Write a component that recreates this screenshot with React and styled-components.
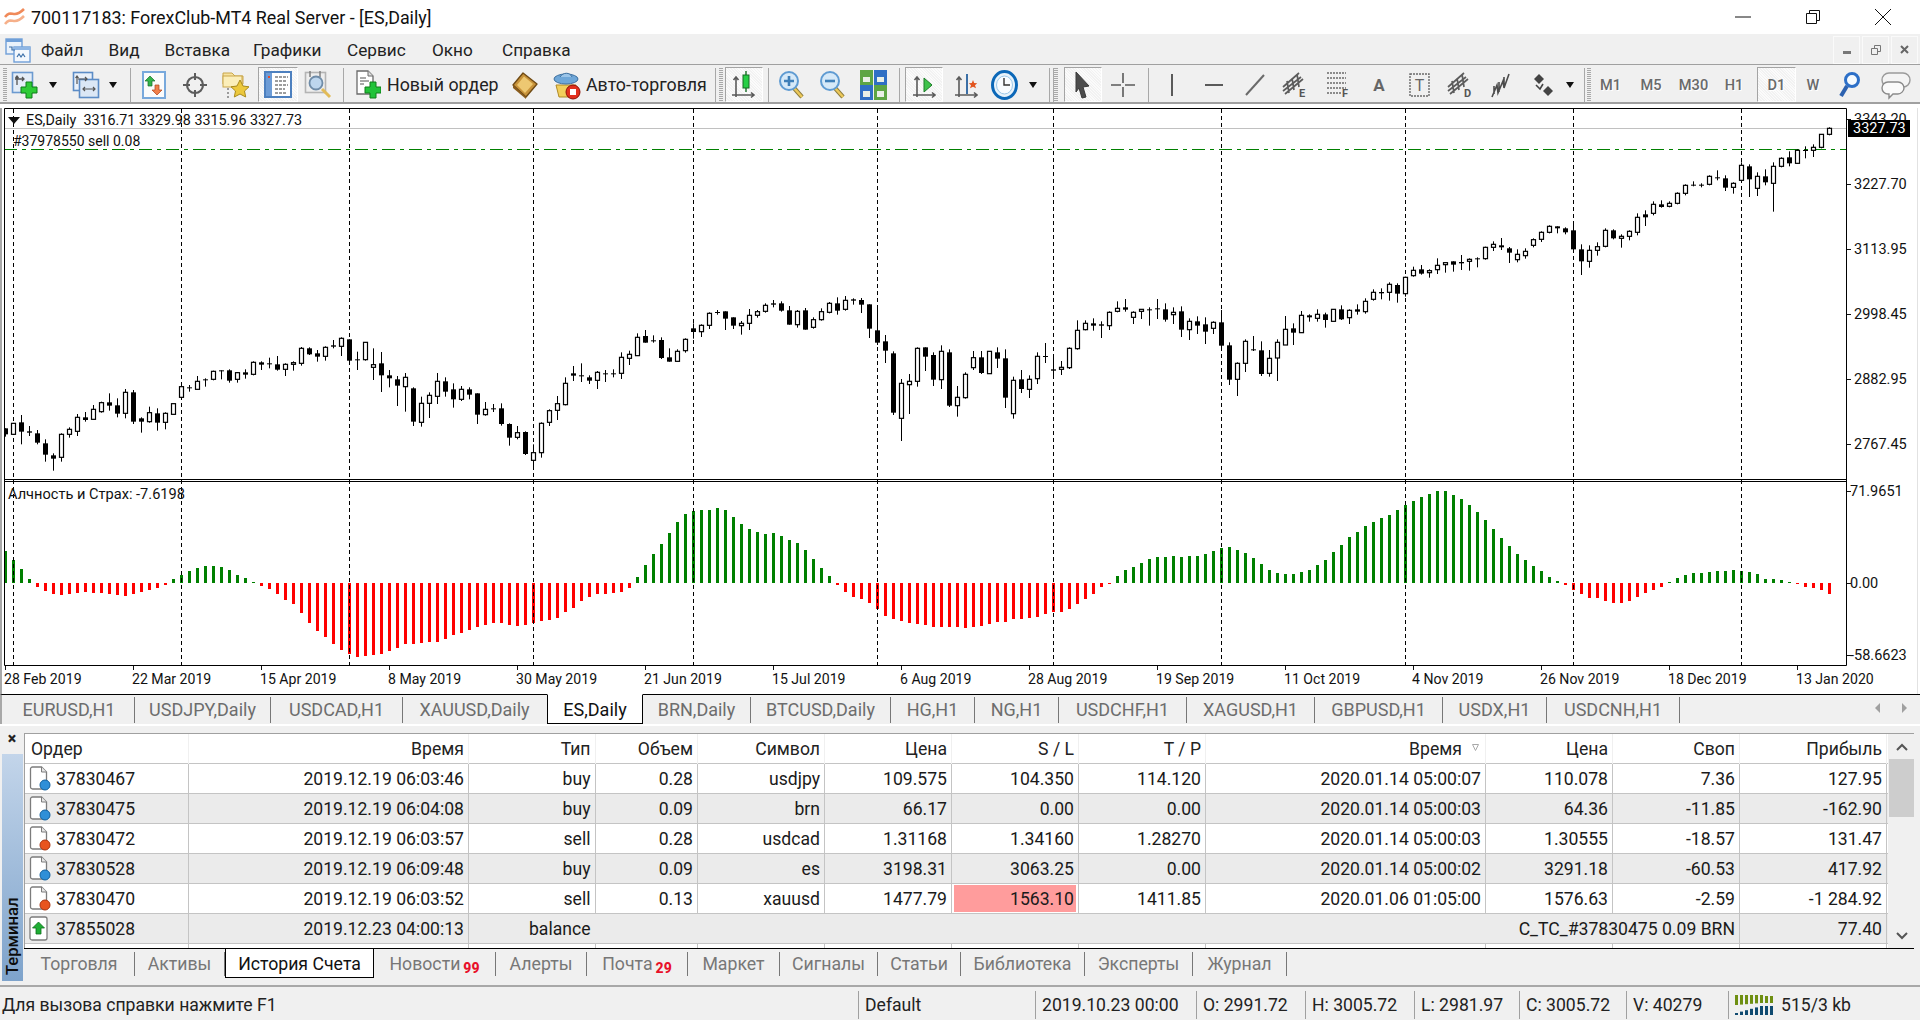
import React from 'react';
import styled, { createGlobalStyle } from 'styled-components';

const Global = createGlobalStyle`
  html, body { margin: 0; padding: 0; background: #f0f0f0; }
  * { box-sizing: border-box; }
  body { font-family: Roboto, "Liberation Sans", sans-serif; color: #1c1c1c; }
`;

const Window = styled.div`
  width: 1920px; height: 1020px; overflow: hidden; display: flex; flex-direction: column; background: #f0f0f0;
`;
const TitleBar = styled.div`
  height: 34px; background: #fff; display: flex; align-items: center; padding: 0 2px 0 4px; flex: none;
`;
const TitleText = styled.div`
  font-size: 17.9px; margin-left: 5px; color: #111; flex: 1; white-space: nowrap;
`;
const WinBtn = styled.div`
  width: ${p => p.$w}px; height: 34px; display: flex; align-items: center; justify-content: center;
  svg { display: block; }
`;
const MenuBar = styled.div`
  height: 31px; flex: none; display: flex; align-items: center; border-bottom: 1px solid #a0a0a0; padding: 1px 0 0 5px; background: #f0f0f0;
  > svg { margin-right: 10px; display: block; flex: none; }
`;
const MenuItem = styled.div`
  font-size: 17.2px; color: #222; width: ${p => p.$w}px; white-space: nowrap;
`;
const MdiBtns = styled.div`
  margin-left: auto; display: flex; gap: 2px; margin-right: 2px; height: 28px;
`;
const MdiBtn = styled.div`
  width: 27px; height: 28px; border: 1px solid #fafafa; display: flex; align-items: center; justify-content: center;
`;
const Toolbar = styled.div`
  height: 39px; flex: none; display: flex; align-items: center; padding: 2px 0 0 3px;
  background: #f0f0f0; border-bottom: 2px solid #a0a0a0;
`;
const Grip = styled.div`
  width: 4px; height: 34px; margin-left: ${p => p.$ml || 0}px; flex: none;
  background-image: repeating-linear-gradient(to bottom, #a8a8a8 0 1px, transparent 1px 2px);
`;
const Sep = styled.div`
  width: 1px; height: 34px; background: #a8a8a8; flex: none; margin-left: ${p => p.$ml}px;
`;
const Tool = styled.div`
  width: ${p => p.$w}px; margin-left: ${p => p.$ml}px; flex: none; height: 35px;
  display: flex; align-items: center; justify-content: center;
  ${p => p.$active ? `
    background-color: #f7f7f7;
    background-image: repeating-linear-gradient(45deg, #f2f2f2 0 1px, #fbfbfb 1px 2px);
    border: 1px solid #fff; border-top-color: #a4a4a4; border-left-color: #a4a4a4;
  ` : ''}
  svg { display: block; flex: none; }
`;
const ToolText = styled.div`
  width: ${p => p.$w}px; margin-left: ${p => p.$ml}px; flex: none; font-size: 17.8px; color: #222; white-space: nowrap;
`;
const Period = styled(Tool)`
  font-size: 14.6px; color: #6a6a6a; font-weight: 500; text-shadow: 1px 1px 0 #fff;
`;
const DropArrow = styled.div`
  flex: none; margin-left: ${p => p.$ml}px; width: 0; height: 0;
  border-left: 4.5px solid transparent; border-right: 4.5px solid transparent; border-top: 6px solid #111;
`;

const ChartArea = styled.div`
  flex: none; height: 590px; background: #fff; display: flex; padding: 4px 2px 0 0; position: relative;
`;
const EdgeLine = styled.div`
  flex: none; width: 4px; border-left: 2px solid #a8a8a8;
`;
const ChartColumn = styled.div`
  display: flex; flex-direction: column; width: 1843px; flex: none;
`;
const Plot = styled.div`
  position: relative; width: 1843px; height: 558px; flex: none;
  svg { display: block; }
`;
const Overlay = styled.div`
  position: absolute; left: ${p => p.$x}px; top: ${p => p.$y}px; font-size: ${p => p.$fs}px; color: #111; white-space: pre; line-height: 16px;
  display: flex; align-items: center;
`;
const Tri = styled.span`
  width: 0; height: 0; border-left: 6px solid transparent; border-right: 6px solid transparent; border-top: 7px solid #111; margin-right: 6px;
`;
const DateAxis = styled.div`
  display: flex; height: 28px;
`;
const DateCell = styled.div`
  width: 128px; flex: none; font-size: 14.1px; color: #111; position: relative; line-height: 16px; padding-top: 5px; white-space: nowrap;
  &::before { content: ''; position: absolute; left: 1px; top: 0; width: 1px; height: 4px; background: #111; }
`;
const PriceAxis = styled.div`
  flex: 1; position: relative; display: flex; flex-direction: column; border-right: 1px solid #e2e2e2;
`;
const PriceGroup = styled.div`
  height: 373px; flex: none; display: flex; flex-direction: column; gap: 49px; padding: 4px 0 0 7px;
`;
const IndicatorGroup = styled.div`
  display: flex; flex-direction: column; padding: 3px 0 0 3px;
`;
const AxisLabel = styled.div`
  font-size: 14.5px; line-height: 16px; height: 16px; color: #111; position: relative; margin-top: ${p => p.$mt || 0}px; white-space: nowrap;
  &::before { content: ''; position: absolute; left: ${p => p.$tick}px; top: 7px; width: 4px; height: 1px; background: #111; }
`;
const PriceTag = styled.div`
  position: absolute; left: 1px; top: 12px; width: 62px; height: 17px; background: #000; color: #fff; font-size: 14.5px; line-height: 17px; padding-left: 5px;
`;

const ChartTabs = styled.div`
  height: 30px; flex: none; display: flex; border-top: 1px solid #000; position: relative; background: #f0f0f0; border-left: 2px solid #a8a8a8;
`;
const TabsInset = styled.div`
  display: flex; margin-left: 2px;
`;
const ChartTab = styled.div`
  width: ${p => p.$w}px; flex: none; font-size: 18px; text-align: center; white-space: nowrap; line-height: 26px; height: 26px; margin-top: 2px;
  color: #6d6d6d; border-right: 1px solid #777;
  ${p => p.$active ? `
    color: #111; background: #fff; height: 30px; margin-top: -1px; border: 1px solid #000; border-top: 1px solid #fff; line-height: 29px;
  ` : ''}
  ${p => p.$plain ? `border-right-color: transparent;` : ''}
`;
const ScrollArrows = styled.div`
  margin-left: auto; display: flex; gap: 22px; margin-right: 13px; padding-top: 8px;
`;
const ArrowLeft = styled.div`
  width: 0; height: 0; border-top: 5px solid transparent; border-bottom: 5px solid transparent; border-right: 5px solid #a0a0a0;
`;
const ArrowRight = styled.div`
  width: 0; height: 0; border-top: 5px solid transparent; border-bottom: 5px solid transparent; border-left: 5px solid #a0a0a0;
`;

const Terminal = styled.div`
  flex: none; height: 261px; display: flex; border-top: 2px solid #fff; background: #f0f0f0;
`;
const Side = styled.div`
  width: 24px; flex: none; display: flex; flex-direction: column; padding: 5px 0 0 2px;
`;
const CloseX = styled.div`
  height: 23px; flex: none; font-size: 16px; font-weight: 900; text-align: center; line-height: 16px; color: #222; padding-right: 2px;
`;
const SideLabel = styled.div`
  height: 227px; width: 21px; flex: none; background: linear-gradient(to top, #c3d5ea, #7ea3cb);
  display: flex; align-items: center; justify-content: flex-start; writing-mode: vertical-rl; transform: rotate(180deg);
  font-size: 16.6px; font-weight: 500; color: #0c0c0c; padding-top: 6px;
`;
const TerminalMain = styled.div`
  flex: 1; display: flex; flex-direction: column; padding: 7px 6px 0 0; min-width: 0;
`;
const GridWrap = styled.div`
  height: 215px; flex: none; display: flex; border-top: 1px solid #a0a0a0; border-left: 1px solid #a0a0a0;
  overflow: hidden; background: #fff;
`;
const Table = styled.div`
  width: 1863px; flex: none; overflow: hidden;
`;
const columns = '164px 280px 126.5px 102.5px 127px 127px 127px 127px 280px 127px 127px 147px';
const HeadRow = styled.div`
  display: grid; grid-template-columns: ${columns}; height: 30px; border-bottom: 1px solid #c4c4c4; background: #fff;
`;
const HeadCell = styled.div`
  font-size: 17.6px; line-height: 30px; text-align: ${p => p.$left ? 'left' : 'right'};
  padding: ${p => p.$left ? '0 0 0 6px' : `0 ${p.$sorted ? 23 : 4}px 0 0`};
  border-right: 1px solid #f0f0f0; color: #222; white-space: nowrap; position: relative;
`;
const SortMark = styled.svg`
  position: absolute; right: 6px; top: 10px; display: block;
`;
const Row = styled.div`
  display: grid; grid-template-columns: ${columns}; height: 30px; border-bottom: 1px solid #c4c4c4;
  background: ${p => p.$even ? '#ebebeb' : '#fff'};
`;
const Cell = styled.div`
  font-size: 17.6px; line-height: 30px; height: 29px; text-align: right; padding-right: 4px; border-right: 1px solid #c4c4c4; color: #1a1a1a; white-space: nowrap;
  grid-column: ${p => p.$span ? `span ${p.$span}` : 'auto'};
  ${p => p.$noBorder ? `border-right-color: transparent;` : ''}
`;
const AlertCell = styled(Cell)`
  position: relative; z-index: 0;
  &::before { content: ''; position: absolute; inset: 1px 2px 1px 2px; background: #ff9c9c; z-index: -1; }
`;
const OrderCell = styled(Cell)`
  display: flex; align-items: center; text-align: left; padding: 0 0 0 4px; gap: 5px;
  svg { display: block; flex: none; }
`;
const ScrollBar = styled.div`
  width: 27px; flex: none; background: #f0f0f0; display: flex; flex-direction: column; align-items: center;
`;
const ScrollBtn = styled.div`
  height: ${p => p.$h}px; flex: none; width: 100%; display: flex; align-items: center; justify-content: center;
`;
const Thumb = styled.div`
  width: 26px; height: 58px; background: #cdcdcd; flex: none; margin-left: 1px;
`;
const ScrollTrack = styled.div`
  flex: 1;
`;
const BottomTabs = styled.div`
  height: 32px; flex: none; display: flex; border-top: 1px solid #000; background: #f0f0f0;
`;
const BottomTab = styled.div`
  width: ${p => p.$w}px; flex: none; font-size: 17.7px; color: #777; text-align: center; white-space: nowrap; line-height: 24px; height: 24px; margin-top: 3px;
  border-right: 1px solid #777;
  ${p => p.$active ? `
    color: #111; background: #fff; height: 30px; margin-top: -1px; border: 1px solid #000; line-height: 30px;
  ` : ''}
`;
const Badge = styled.span`
  color: #e8102a; font-weight: 800; font-size: 14px; margin-left: 3px; position: relative; top: 3px;
`;
const StatusBar = styled.div`
  margin-top: auto; height: 35px; flex: none; border-top: 2px solid #a8a8a8; display: flex; align-items: center; padding-top: 3px; background: #f0f0f0;
`;
const StatusCell = styled.div`
  width: ${p => p.$w}px; flex: none; height: 28px; font-size: 17.6px; line-height: 27px; padding-left: ${p => p.$first ? 2 : 6}px; color: #222; white-space: nowrap;
  border-left: ${p => p.$first ? 'none' : '1px solid #a0a0a0'};
  display: flex; align-items: center; gap: 8px;
  svg { display: block; flex: none; }
`;

/* ---------- chart data: [kind, bodyTop, bodyBottom, wickTop, wickBottom] measured per crop ---------- */
const seg1 = `b385 403 385 410,h370 403 370 405,b367 395 345 433,b394 398 378 408,b400 428 390 433,b430 464 418 485,b466 476 460 512,h403 472 400 485,h388 403 382 413,h352 394 342 408,b352 360 336 365,h328 358 315 358,h308 335 305 338,b307 317 280 332,b316 341 295 352,h277 340 267 355,b277 365 270 372,b355 365 352 398,h338 365 320 368,b340 368 325 392,h340 367 337 388,h311 343 311 343,h260 292 255 295,b262 265 255 275,h244 268 228 268,b238 241 235 260,h214 238 212 241,b211 214 211 238,b211 242 208 248,h218 238 216 248,b217 224 208 236,h187 223 184 226,b187 194 184 210,b190 193 173 205,b193 209 168 212,h193 208 190 228,h188 193 184 212,h145 190 141 197,b145 163 142 165,b160 170 150 185,h142 169 139 182,b136 140 120 145,h115 139 112 168,b118 182 118 188,b178 181 155 210,h127 179 127 182,h194 202 145 240,b190 226 156 276,b226 235 210 262,b238 257 228 318,h232 260 219 335,b265 365 262 378,h310 367 290 380,h286 310 277 354,h244 289 219 312,b244 275 232 290,b268 298 250 323,h268 298 258 303,b268 284 262 298,b280 344 280 372,h328 344 306 347,b325 328 312 336,b325 372 310 377,b372 413 370 437,h398 412 378 418,b396 462 394 465,h458 481 433 500,h370 458 367 473,h332 367 328 378,h311 331 288 360,h250 314 232 316,b220 227 198 243,b226 229 190 246,b232 242 226 252,h217 241 213 267,b220 223 210 246,b220 222 208 232,h172 220 157 237,h163 175 152 195,h112 167 100 168`;
const seg2 = `b198 218 180 218,b211 213 196 218,b210 264 202 267,b262 275 235 275,h244 274 238 274,h208 242 205 248,b175 186 160 206,h166 185 163 201,h130 166 127 177,b126 128 120 134,b124 146 124 180,b142 167 142 177,h160 167 153 194,h136 160 117 180,h125 136 120 143,h106 124 100 128,b100 104 90 112,b100 122 94 125,b121 164 108 164,h124 164 120 173,b121 179 114 179,h149 172 142 176,h125 149 115 152,h100 127 96 130,b100 122 82 134,h91 118 78 122,b88 92 85 104,b90 104 84 129,b103 176 103 204,b181 218 105 225,b214 242 195 279,b250 428 244 435,h340 445 327 513,h334 344 312 432,h235 334 232 350,b232 260 232 303,b255 329 247 348,h244 329 226 357,b247 407 238 411,h382 407 348 440,h313 383 307 386,h263 293 243 300,b262 309 243 312,h244 311 244 311,b247 266 232 294,b265 383 238 414,h331 431 320 446,b328 357 300 369,h328 358 316 384,h259 326 247 342,b258 260 219 279,b298 302 252 316,h292 298 273 315,h235 293 232 297,h181 236 151 239,h160 179 151 181,b160 167 145 182,b163 167 154 204,h127 167 124 180,h115 124 94 127,b112 119 87 125,h127 142 124 162,h118 124 118 147,b118 121 112 167,b115 118 87 147,b118 149 100 155,h127 134 112 162,b124 179 109 201,h154 179 145 210,b154 167 139 192,b163 185 142 222,h157 175 154 192,b157 227 120 240,b226 329 217 345,h280 328 277 378,h214 280 208 306,b238 240 198 243,b241 312 214 318,h265 310 240 320,h217 264 208 333`;
const seg3 = `h688 735 648 735,b685 698 670 735,h646 698 633 698,b646 652 643 665,h643 655 628 665,b643 660 638 683,h628 664 628 664,b628 658 616 660,h631 653 628 672,b628 635 613 644,h604 635 595 641,h577 598 568 602,b576 580 565 598,h553 577 547 602,b555 581 550 608,h532 581 530 590,h511 527 500 530,b508 521 495 524,h512 518 508 533,h496 509 475 522,h488 494 488 518,b484 494 484 515,b486 490 465 510,h478 484 475 512,b475 478 472 502,h442 476 440 479,h433 442 424 453,b436 442 414 450,b445 458 441 489,h463 479 448 487,h454 467 445 476,h419 436 415 442,h397 418 394 426,h379 397 376 400,b379 385 379 400,b385 397 382 403,b391 448 367 448,b448 484 433 525,h451 484 436 503,h440 451 427 467,h391 439 385 442,b391 415 388 418,h409 415 403 443,h394 409 391 421,h352 397 340 406,b343 352 331 378,h313 340 304 346,b313 321 301 323,h310 319 304 322,h280 310 277 313,h256 280 253 286,b254 256 244 259,b254 256 250 262,h229 253 226 256,b232 234 211 241,b235 263 226 273,h250 262 247 281,h196 241 187 244,b199 238 193 291,h229 265 217 288,b229 247 208 256,h199 250 187 335,h175 199 172 202,b172 190 154 199,h151 190 148 190,b150 152 139 175,h142 151 133 171,h103 142 103 145,h85 103 82 106`;
const parseSeg = (s, off) => s.split(',').map(t => {
  const [a, b, c, d] = t.slice(1).split(' ').map(v => off + Number(v) / 3);
  return { hollow: t[0] === 'h', top: a, bottom: b, hi: c, lo: d };
});
const candles = [...parseSeg(seg1, 300), ...parseSeg(seg2, 270), ...parseSeg(seg3, 100)];
const ind = [96,69,42,12,-12,-24,-33,-36,-33,-30,-27,-30,-30,-33,-36,-39,-33,-27,-21,-15,-6,12,24,36,45,51,51,48,39,24,15,3,-9,-18,-33,-51,-63,-90,-120,-144,-162,-183,-201,-213,-222,-219,-216,-213,-204,-195,-183,-183,-180,-177,-177,-168,-156,-150,-141,-132,-126,-120,-120,-126,-129,-126,-120,-114,-111,-105,-87,-75,-54,-42,-33,-33,-30,-27,-15,18,
54,87,117,150,183,207,216,219,219,225,219,198,177,162,153,147,150,141,129,120,99,72,45,21,-6,-27,-42,-48,-60,-78,-99,-108,-114,-120,-123,-126,-132,-132,-132,-132,-135,-132,-129,-123,-117,-117,-108,-108,-105,-102,-93,-87,-87,-78,-63,-48,-33,-12,-3,21,39,48,60,72,78,78,81,78,81,81,87,96,105,108,99,90,75,57,39,30,
27,27,33,39,54,69,93,114,138,153,171,183,195,204,219,234,246,258,267,276,276,264,252,234,213,189,162,135,111,87,69,51,36,18,6,-6,-21,-33,-45,-45,-54,-60,-60,-54,-42,-30,-21,-12,3,15,24,30,30,33,36,36,39,36,33,27,12,12,9,3,-3,-12,-15,-21,-33];
const gridIdx = [1,22,43,66,86,109,131,152,175,196,217];
const cx = i => 5.5 + 8 * i;

const ChartDrawing = () => (
  <svg width="1843" height="558" viewBox="4 108 1843 558">
    <rect x="4" y="108" width="1843" height="558" fill="#fff" />
    <line x1="4" x2="1847" y1="128.5" y2="128.5" stroke="#c0c0c0" strokeWidth="1.2" />
    {ind.map((v, i) => {
      const h = Math.abs(v) / 3;
      return <rect key={i} x={cx(i) - 1.5} y={v > 0 ? 583 - h : 583} width="3" height={h} fill={v > 0 ? '#008000' : '#ff0000'} />;
    })}
    {gridIdx.map(i => <line key={i} x1={cx(i)} x2={cx(i)} y1="109" y2="665" stroke="#000" strokeWidth="1" strokeDasharray="4 3" />)}
    <line x1="4" x2="1847" y1="149.5" y2="149.5" stroke="#008000" strokeWidth="1.1" strokeDasharray="13 5 4 5" />
    {candles.map((c, i) => {
      const x = cx(i);
      const h = Math.max(c.bottom - c.top, 1);
      return (
        <g key={i}>
          <line x1={x} x2={x} y1={c.hi} y2={c.lo} stroke="#000" strokeWidth="1" />
          {c.hollow
            ? <rect x={x - 2} y={c.top} width="4" height={h} fill="#fff" stroke="#000" strokeWidth="1.2" />
            : <rect x={x - 2.5} y={c.top} width="5" height={h} fill="#000" />}
        </g>
      );
    })}
    <rect x="4" y="479" width="1843" height="2" fill="#fff" />
    <path d="M4.5 108.5H1846.5V665.5H4.5Z M4 479.5H1847 M4 481.5H1847" fill="none" stroke="#000" strokeWidth="1" />
    {gridIdx.map(i => <line key={`g${i}`} x1={cx(i)} x2={cx(i)} y1="479" y2="482" stroke="#000" strokeWidth="1" />)}
  </svg>
);

/* ---------- icons ---------- */
const PLUS = 'M15 11h6v5h5v6h-5v5h-6v-5h-5v-6h5z';
const Logo = () => (
  <svg width="22" height="20" viewBox="0 0 22 20">
    <path d="M1 10c4-5 6-3 10-3s6-2 9-5" fill="none" stroke="#f08a5a" strokeWidth="2.6" />
    <path d="M1 17c4-5 6-3 10-3s6-2 9-5" fill="none" stroke="#f6b08a" strokeWidth="2.6" />
  </svg>
);
const ChildIcon = () => (
  <svg width="26" height="26" viewBox="0 0 26 26">
    <rect x="1" y="2" width="16" height="15" fill="#eaf2fb" stroke="#6f9fd8" strokeWidth="1.4" />
    <rect x="1" y="2" width="16" height="3" fill="#6f9fd8" />
    <rect x="9" y="10" width="16" height="15" fill="#f4f8fd" stroke="#6f9fd8" strokeWidth="1.4" />
    <rect x="9" y="10" width="16" height="3" fill="#8fb6e4" />
    <path d="M4 10h3v3h3M12 20l2-3 2 3 2-3 2 3" fill="none" stroke="#3a6ea8" strokeWidth="1.2" />
  </svg>
);
const Axes = ({ x = 0, y = 0, c = '#5a5a5a' }) => (
  <path transform={`translate(${x} ${y})`} d="M4 2v20M1.5 5L4 2l2.5 3M0 20h22M19 17.5l3 2.5-3 2.5" fill="none" stroke={c} strokeWidth="1.6" />
);
const IconNewChart = () => (
  <svg width="28" height="28" viewBox="0 0 28 28">
    <rect x="1.5" y="1.5" width="20" height="20" fill="#e4edf7" stroke="#6c9ad0" strokeWidth="1.6" />
    <path d="M6 5v9M4.500 7L6 5l1.500 2M4 8h9M11 6l2 2-2 2" fill="none" stroke="#555" strokeWidth="1.3" />
    <path d={PLUS} fill="#2ecb36" stroke="#0e7d18" strokeWidth="1" />
  </svg>
);
const IconProfile = () => (
  <svg width="28" height="28" viewBox="0 0 28 28">
    <rect x="1.5" y="1.5" width="19" height="18" fill="#e9f0f9" stroke="#5c8cc6" strokeWidth="1.6" />
    <rect x="7.5" y="8.5" width="19" height="18" fill="#dbe7f5" stroke="#5c8cc6" strokeWidth="1.6" />
    <path d="M5 5v8M3.500 7L5 5l1.500 2M6 8h9M13 6l2 2-2 2M11 18h12M13 16l-2 2 2 2M21 16l2 2-2 2" fill="none" stroke="#555" strokeWidth="1.2" />
  </svg>
);
const IconMarket = () => (
  <svg width="24" height="28" viewBox="0 0 24 28">
    <rect x="1" y="1" width="22" height="26" fill="#fbfbfb" stroke="#79a9dc" strokeWidth="2" />
    <path d="M8 5l5 5h-3v5H6v-5H3z" fill="#34b34a" stroke="#176f28" strokeWidth=".7" />
    <path d="M15 24l5-5h-3v-5h-4v5h-3z" fill="#f07f4a" stroke="#b0421a" strokeWidth=".7" />
  </svg>
);
const IconCrossCircle = () => (
  <svg width="24" height="24" viewBox="0 0 24 24">
    <circle cx="12" cy="12" r="8" fill="none" stroke="#5c5c5c" strokeWidth="2.2" />
    <path d="M12 0v7M12 17v7M0 12h7M17 12h7" stroke="#5c5c5c" strokeWidth="2" />
  </svg>
);
const IconFav = () => (
  <svg width="28" height="28" viewBox="0 0 28 28">
    <path d="M1 2h9l3 3h8v8H1z" fill="#f7e3a0" stroke="#c9a64a" />
    <rect x="1" y="5" width="19" height="11" fill="#fbeeb9" stroke="#c9a64a" />
    <path d="M6 17v10" stroke="#777" strokeWidth="1.4" strokeDasharray="2 2" />
    <path d="M18 9l3 6 6 .8-4.500 4.200 1.200 6L18 23l-5.700 3 1.200-6L9 15.800l6-.8z" fill="#ecc83c" stroke="#a98a1c" />
  </svg>
);
const IconNavigator = () => (
  <svg width="28" height="27" viewBox="0 0 28 27">
    <rect x="1" y="1" width="26" height="25" fill="#fff" stroke="#4d80bf" strokeWidth="2" />
    <rect x="2" y="2" width="6" height="23" fill="#6d9cd6" />
    <rect x="4" y="5" width="2" height="2" fill="#e84a2a" />
    <path d="M11 6h13M11 10h11M11 14h13M11 18h10M11 22h12" stroke="#3c3c3c" strokeWidth="1.2" strokeDasharray="3 1" />
  </svg>
);
const IconTester = () => (
  <svg width="28" height="29" viewBox="0 0 28 29">
    <rect x="1.5" y="2.5" width="20" height="20" fill="#eeeeee" stroke="#b4b4b4" strokeWidth="1.6" />
    <path d="M6 1v6M16 1v6" stroke="#7a7a7a" strokeWidth="1.4" />
    <circle cx="12" cy="13" r="6.5" fill="#bdd6ee" stroke="#6f8ca8" strokeWidth="1.8" />
    <path d="M18 19l8 8" stroke="#e2bb58" strokeWidth="3" />
  </svg>
);
const IconOrder = () => (
  <svg width="26" height="29" viewBox="0 0 26 29">
    <path d="M2 1h11l5 5v18H2z" fill="#fff" stroke="#6a6a6a" strokeWidth="1.3" />
    <path d="M13 1v5h5" fill="#ddd" stroke="#6a6a6a" />
    <path d="M5 8h6M5 11h9M5 14h4" stroke="#555" strokeWidth="1.2" />
    <path d={PLUS} transform="translate(0 1)" fill="#22c33a" stroke="#0e7d18" />
  </svg>
);
const IconBook = () => (
  <svg width="26" height="28" viewBox="0 0 26 28">
    <path d="M1 14L11 2l14 11-11 13z" fill="#c8933a" stroke="#6f4a14" strokeWidth="1.4" strokeLinejoin="round" />
    <path d="M5 14L12 5.500l9 7.500-8 9z" fill="#edc872" />
    <path d="M1 14l13 12v2L1 17z" fill="#8a5c1c" />
  </svg>
);
const IconAuto = () => (
  <svg width="28" height="30" viewBox="0 0 28 30">
    <path d="M3 15h20l-2 12H6z" fill="#f2cf5c" stroke="#b08a25" />
    <ellipse cx="13" cy="9" rx="12" ry="5" fill="#6fa7d8" stroke="#3d6f9e" />
    <path d="M7 7c3-5 10-5 12 0" fill="#9ac4e8" stroke="#3d6f9e" />
    <circle cx="20" cy="22" r="7" fill="#e2301e" stroke="#8e1208" />
    <rect x="17" y="19" width="6" height="6" fill="#fff" />
  </svg>
);
const IconCandleMode = () => (
  <svg width="26" height="30" viewBox="0 0 26 30">
    <Axes x="1" y="5" />
    <path d="M15 1v21" stroke="#146b22" strokeWidth="1.4" />
    <rect x="12" y="5" width="6" height="13" fill="#26cf45" stroke="#146b22" />
  </svg>
);
const IconZoom = ({ minus }) => (
  <svg width="26" height="30" viewBox="0 0 26 30">
    <path d="M15 18l8 9" stroke="#8a7a3c" strokeWidth="4.4" />
    <path d="M15 18l8 9" stroke="#ecc85a" strokeWidth="2.6" />
    <circle cx="10" cy="11" r="9" fill="#d6e9f8" stroke="#5f9bd2" strokeWidth="2" />
    <path d={minus ? 'M5 11h10' : 'M5 11h10M10 6v10'} stroke="#3f7fb8" strokeWidth="2.6" />
  </svg>
);
const IconTile = () => (
  <svg width="27" height="30" viewBox="0 0 27 30">
    <rect x="0" y="0" width="13" height="15" fill="#5da544" />
    <rect x="14" y="0" width="13" height="15" fill="#2f6fc4" />
    <rect x="0" y="15" width="13" height="15" fill="#2f6fc4" />
    <rect x="14" y="15" width="13" height="15" fill="#5da544" />
    <path d="M3 7h7v5H3zM17 7h7v5h-7zM3 21h7v6H3zM17 21h7v6h-7z" fill="#e8efe6" />
  </svg>
);
const IconShift = () => (
  <svg width="24" height="30" viewBox="0 0 24 30">
    <Axes x="1" y="5" />
    <path d="M12 8l8 7-8 7z" fill="#3ec24a" stroke="#1c7c28" />
  </svg>
);
const IconAutoScroll = () => (
  <svg width="24" height="30" viewBox="0 0 24 30">
    <Axes x="1" y="5" />
    <path d="M13 4v20" stroke="#3b6fa6" strokeWidth="2" />
    <path d="M19 10l1.200 3 3 .2-2.200 2 1 3-3-1.500-3 1.500 1-3-2.200-2 3-.2z" fill="#e2541e" />
  </svg>
);
const IconClock = () => (
  <svg width="27" height="30" viewBox="0 0 27 30">
    <ellipse cx="13.5" cy="15" rx="12" ry="13.5" fill="#e8f3fb" stroke="#0c68b8" strokeWidth="3" />
    <ellipse cx="13.5" cy="15" rx="8" ry="9" fill="#f8fcff" stroke="#9cc8e8" />
    <path d="M13 8v7h6" fill="none" stroke="#333" strokeWidth="1.4" />
  </svg>
);
const IconCursor = () => (
  <svg width="16" height="28" viewBox="0 0 16 28">
    <path d="M1 1l13 14-6 1 3 10-4 1-3-10-3 4z" fill="#4c4c4c" stroke="#3a3a3a" />
  </svg>
);
const IconCross = () => (
  <svg width="24" height="24" viewBox="0 0 24 24">
    <path d="M12 0v10M12 14v10M0 12h10M14 12h10" stroke="#5a5a5a" strokeWidth="1.6" />
  </svg>
);
const IconV = () => <svg width="4" height="22" viewBox="0 0 4 22"><path d="M2 0v22" stroke="#5a5a5a" strokeWidth="2" /></svg>;
const IconH = () => <svg width="18" height="4" viewBox="0 0 18 4"><path d="M0 2h18" stroke="#5a5a5a" strokeWidth="2" /></svg>;
const IconTrend = () => <svg width="20" height="22" viewBox="0 0 20 22"><path d="M1 21L19 1" stroke="#6a6a6a" strokeWidth="2" /></svg>;
const IconChannel = ({ letter }) => (
  <svg width="27" height="33" viewBox="0 0 27 33">
    <path d="M1 19L17 5M1 23L19 9M3 26L21 11M7 25L5 13M12 22L10 10M17 19L15 6" fill="none" stroke="#5c5c5c" strokeWidth="1.7" />
    <text x="17" y="29" fontSize="11" fontWeight="700" fontFamily="Roboto, sans-serif" fill="#555">{letter}</text>
  </svg>
);
const IconFib = () => (
  <svg width="24" height="33" viewBox="0 0 24 33">
    <path d="M1 5h19M1 10h19M1 15h19M1 20h19M1 25h14" stroke="#6a6a6a" strokeWidth="1.6" strokeDasharray="2 1" />
    <text x="16" y="29" fontSize="11" fontWeight="700" fontFamily="Roboto, sans-serif" fill="#555">F</text>
  </svg>
);
const IconLabel = styled.div`
  font-size: 17px; font-weight: 700; color: #666; line-height: 20px;
`;
const IconTextBox = () => (
  <svg width="21" height="26" viewBox="0 0 21 26">
    <rect x="1" y="2" width="19" height="22" fill="none" stroke="#6a6a6a" strokeWidth="1.4" strokeDasharray="2 1" />
    <text x="10.5" y="19" textAnchor="middle" fontSize="16" fontFamily="Roboto, sans-serif" fill="#666">T</text>
  </svg>
);
const IconZig = () => (
  <svg width="20" height="26" viewBox="0 0 20 26">
    <path d="M1 25l5-12 1 8 5-12 1 7 5-14M3 14v8M8 10v10M13 5v10" fill="none" stroke="#4c4c4c" strokeWidth="1.6" />
  </svg>
);
const IconArrows = () => (
  <svg width="23" height="26" viewBox="0 0 23 26">
    <path d="M7 2l5 5-5 5-5-5z" fill="#444" />
    <path d="M16 14l5 5-5 5-5-5z" fill="#444" />
    <path d="M4 13l4 4 3-5" fill="none" stroke="#444" strokeWidth="1.6" />
  </svg>
);
const IconSearch = () => (
  <svg width="22" height="28" viewBox="0 0 22 28">
    <circle cx="13" cy="9" r="6.5" fill="#f6fbff" stroke="#2d70c8" strokeWidth="3" />
    <path d="M8 15L2 25" stroke="#2d62b0" strokeWidth="4" />
  </svg>
);
const IconChat = () => (
  <svg width="33" height="30" viewBox="0 0 33 30">
    <path d="M11 10h14a7 7 0 0 1 7 7c0 4-3 7-7 7h-2v4l-5-4h-7a7 7 0 0 1 0-14z" transform="translate(-2 -7)" fill="#f4f4f4" stroke="#9a9a9a" strokeWidth="1.4" />
    <path d="M8 12h10a6 6 0 0 1 6 6c0 3-3 6-6 6h-5l-4 4v-4H8a6 6 0 0 1 0-12z" fill="#fafafa" stroke="#8a8a8a" strokeWidth="1.4" />
  </svg>
);
const IconDoc = ({ color, edge }) => (
  <svg width="22" height="25" viewBox="0 0 22 25">
    <path d="M1.5 3a2 2 0 0 1 2-2h9l5 5v15a2 2 0 0 1-2 2h-12a2 2 0 0 1-2-2z" fill="#fff" stroke="#7c7c7c" strokeWidth="1.3" />
    <path d="M12.500 1v5h5" fill="#e6e6e6" stroke="#7c7c7c" />
    <circle cx="16" cy="19" r="5" fill={color} stroke={edge} />
  </svg>
);
const IconBalance = () => (
  <svg width="22" height="25" viewBox="0 0 22 25">
    <rect x="1" y="1" width="17" height="23" rx="2" fill="#fff" stroke="#7c7c7c" strokeWidth="1.3" />
    <path d="M9.500 6l6 6h-3.500v6h-5v-6H3.500z" fill="#1fae34" stroke="#0c6e1c" strokeWidth=".8" />
  </svg>
);
const IconSignal = () => (
  <svg width="38" height="20" viewBox="0 0 38 20">
    {[0,1,2,3,4,5,6,7].map(i => (
      <g key={i}>
        <rect x={i * 5} y={i < 6 ? 0 : 1} width="3" height={10 - (i < 6 ? i * 0.4 : 3)} fill="#6e8f12" />
        <rect x={i * 5} y={Math.max(18 - i * 1.4, 11)} width="3" height={20 - Math.max(18 - i * 1.4, 11)} fill="#0f4a70" />
      </g>
    ))}
  </svg>
);

const orders = [
  ['37830467','2019.12.19 06:03:46','buy','0.28','usdjpy','109.575','104.350','114.120','2020.01.14 05:00:07','110.078','7.36','127.95'],
  ['37830475','2019.12.19 06:04:08','buy','0.09','brn','66.17','0.00','0.00','2020.01.14 05:00:03','64.36','-11.85','-162.90'],
  ['37830472','2019.12.19 06:03:57','sell','0.28','usdcad','1.31168','1.34160','1.28270','2020.01.14 05:00:03','1.30555','-18.57','131.47'],
  ['37830528','2019.12.19 06:09:48','buy','0.09','es','3198.31','3063.25','0.00','2020.01.14 05:00:02','3291.18','-60.53','417.92'],
  ['37830470','2019.12.19 06:03:52','sell','0.13','xauusd','1477.79','1563.10','1411.85','2020.01.06 01:05:00','1576.63','-2.59','-1 284.92'],
];
const heads = ['Время','Тип','Объем','Символ','Цена','S / L','T / P','Время','Цена','Своп','Прибыль'];
const dates = ['28 Feb 2019','22 Mar 2019','15 Apr 2019','8 May 2019','30 May 2019','21 Jun 2019','15 Jul 2019','6 Aug 2019','28 Aug 2019','19 Sep 2019','11 Oct 2019','4 Nov 2019','26 Nov 2019','18 Dec 2019','13 Jan 2020'];
const chartTabs = [['EURUSD,H1',131],['USDJPY,Daily',136],['USDCAD,H1',132],['XAUUSD,Daily',144],['ES,Daily',96,true],['BRN,Daily',108],['BTCUSD,Daily',140],['HG,H1',84],['NG,H1',84],['USDCHF,H1',128],['XAGUSD,H1',128],['GBPUSD,H1',128],['USDX,H1',104],['USDCNH,H1',133]];
const termTabs = [['Торговля',111],['Активы',90],['История Счета',149,true],['Новости',122,false,'99'],['Алерты',91],['Почта',101,false,'29'],['Маркет',92],['Сигналы',98],['Статьи',83],['Библиотека',124],['Эксперты',108],['Журнал',94]];

export default function App() {
  return (
    <Window>
      <Global />
      <TitleBar>
        <Logo />
        <TitleText>700117183: ForexClub-MT4 Real Server - [ES,Daily]</TitleText>
        <WinBtn $w={70}><svg width="16" height="2"><path d="M0 1h16" stroke="#111" /></svg></WinBtn>
        <WinBtn $w={70}><svg width="16" height="16" viewBox="0 0 16 16"><path d="M1.500 4.500h10v10h-10zM4.500 4.500v-3h10v10h-3" fill="none" stroke="#111" /></svg></WinBtn>
        <WinBtn $w={70}><svg width="16" height="16" viewBox="0 0 16 16"><path d="M0 0l16 16M16 0L0 16" stroke="#111" /></svg></WinBtn>
      </TitleBar>
      <MenuBar>
        <ChildIcon />
        <MenuItem $w={67.5}>Файл</MenuItem>
        <MenuItem $w={56}>Вид</MenuItem>
        <MenuItem $w={88.5}>Вставка</MenuItem>
        <MenuItem $w={94}>Графики</MenuItem>
        <MenuItem $w={85}>Сервис</MenuItem>
        <MenuItem $w={70}>Окно</MenuItem>
        <MenuItem $w={80}>Справка</MenuItem>
        <MdiBtns>
          <MdiBtn><svg width="8" height="3" style={{ marginTop: 6 }}><rect width="8" height="3" fill="#777" /></svg></MdiBtn>
          <MdiBtn><svg width="10" height="10" viewBox="0 0 10 10"><path d="M.5 3.500h6v6h-6zM3.500 3V.5h6v6H7" fill="none" stroke="#777" /></svg></MdiBtn>
          <MdiBtn><svg width="9" height="9" viewBox="0 0 9 9"><path d="M1 1l7 7M8 1L1 8" stroke="#666" strokeWidth="2" /></svg></MdiBtn>
        </MdiBtns>
      </MenuBar>
      <Toolbar>
        <Grip />
        <Tool $w={28} $ml={4}><IconNewChart /></Tool>
        <DropArrow $ml={10} />
        <Tool $w={28} $ml={15}><IconProfile /></Tool>
        <DropArrow $ml={9} />
        <Sep $ml={13} />
        <Tool $w={24} $ml={11}><IconMarket /></Tool>
        <Tool $w={22} $ml={18}><IconCrossCircle /></Tool>
        <Tool $w={28} $ml={16}><IconFav /></Tool>
        <Tool $w={40} $ml={8} $active><IconNavigator /></Tool>
        <Tool $w={28} $ml={6}><IconTester /></Tool>
        <Sep $ml={11} />
        <Tool $w={25} $ml={11}><IconOrder /></Tool>
        <ToolText $w={114} $ml={7}>Новый ордер</ToolText>
        <Tool $w={26} $ml={11}><IconBook /></Tool>
        <Tool $w={27} $ml={15}><IconAuto /></Tool>
        <ToolText $w={122} $ml={6}>Авто-торговля</ToolText>
        <Sep $ml={7} />
        <Grip $ml={3} />
        <Tool $w={38} $ml={2} $active><IconCandleMode /></Tool>
        <Sep $ml={5} />
        <Tool $w={25} $ml={10}><IconZoom /></Tool>
        <Tool $w={25} $ml={16}><IconZoom minus /></Tool>
        <Tool $w={27} $ml={15}><IconTile /></Tool>
        <Sep $ml={12} />
        <Tool $w={38} $ml={5} $active><IconShift /></Tool>
        <Tool $w={23} $ml={11}><IconAutoScroll /></Tool>
        <Tool $w={27} $ml={14}><IconClock /></Tool>
        <DropArrow $ml={11} />
        <Sep $ml={12} />
        <Sep $ml={3} />
        <Grip $ml={0} />
        <Tool $w={38} $ml={6} $active><IconCursor /></Tool>
        <Tool $w={24} $ml={9}><IconCross /></Tool>
        <Sep $ml={13} />
        <Tool $w={12} $ml={17}><IconV /></Tool>
        <Tool $w={18} $ml={27}><IconH /></Tool>
        <Tool $w={20} $ml={22}><IconTrend /></Tool>
        <Tool $w={27} $ml={17}><IconChannel letter="E" /></Tool>
        <Tool $w={24} $ml={17}><IconFib /></Tool>
        <Tool $w={14} $ml={22}><IconLabel>A</IconLabel></Tool>
        <Tool $w={21} $ml={23}><IconTextBox /></Tool>
        <Tool $w={27} $ml={17}><IconChannel letter="D" /></Tool>
        <Tool $w={19} $ml={17}><IconZig /></Tool>
        <Tool $w={22} $ml={22}><IconArrows /></Tool>
        <DropArrow $ml={12} />
        <Sep $ml={10} />
        <Grip $ml={2} />
        <Period $w={21} $ml={9}>M1</Period>
        <Period $w={20} $ml={20}>M5</Period>
        <Period $w={27} $ml={19}>M30</Period>
        <Period $w={18} $ml={18}>H1</Period>
        <Period $w={39} $ml={14} $active>D1</Period>
        <Period $w={14} $ml={10}>W</Period>
        <Tool $w={21} $ml={19}><IconSearch /></Tool>
        <Tool $w={32} $ml={20}><IconChat /></Tool>
      </Toolbar>
      <ChartArea>
        <EdgeLine />
        <ChartColumn>
          <Plot>
            <ChartDrawing />
            <Overlay $x={4} $y={4} $fs={14.3}><Tri />ES,Daily  3316.71 3329.98 3315.96 3327.73</Overlay>
            <Overlay $x={9} $y={25} $fs={14}>#37978550 sell 0.08</Overlay>
            <Overlay $x={4} $y={378} $fs={14.6}>Алчность и Страх: -7.6198</Overlay>
          </Plot>
          <DateAxis>
            {dates.map(d => <DateCell key={d}>{d}</DateCell>)}
          </DateAxis>
        </ChartColumn>
        <PriceAxis>
          <PriceGroup>
            {['3343.20','3227.70','3113.95','2998.45','2882.95','2767.45'].map(p => <AxisLabel key={p} $tick={-7}>{p}</AxisLabel>)}
          </PriceGroup>
          <IndicatorGroup>
            <AxisLabel $tick={-3}>71.9651</AxisLabel>
            <AxisLabel $tick={-3} $mt={76}>0.00</AxisLabel>
            <AxisLabel $tick={-3} $mt={56}>-58.6623</AxisLabel>
          </IndicatorGroup>
          <PriceTag>3327.73</PriceTag>
        </PriceAxis>
      </ChartArea>
      <ChartTabs>
        <TabsInset>
          {chartTabs.map(([t, w, a], i) => <ChartTab key={t} $w={w} $active={a} $plain={chartTabs[i + 1] && chartTabs[i + 1][2]}>{t}</ChartTab>)}
        </TabsInset>
        <ScrollArrows><ArrowLeft /><ArrowRight /></ScrollArrows>
      </ChartTabs>
      <Terminal>
        <Side>
          <CloseX>×</CloseX>
          <SideLabel>Терминал</SideLabel>
        </Side>
        <TerminalMain>
          <GridWrap>
            <Table>
              <HeadRow>
                <HeadCell $left>Ордер</HeadCell>
                {heads.map((h, i) => (
                  <HeadCell key={i} $sorted={i === 7}>
                    {h}
                    {i === 7 && <SortMark width="7" height="7" viewBox="0 0 7 7"><path d="M.5.5h6L3.500 6.500z" fill="none" stroke="#a8a8a8" /></SortMark>}
                  </HeadCell>
                ))}
              </HeadRow>
              {orders.map((o, r) => (
                <Row key={o[0]} $even={r % 2 === 1}>
                  <OrderCell>
                    {o[2] === 'buy' ? <IconDoc color="#2f8fd8" edge="#12609e" /> : <IconDoc color="#e8541e" edge="#a83410" />}
                    {o[0]}
                  </OrderCell>
                  {o.slice(1).map((v, i) => (i === 5 && r === 4
                    ? <AlertCell key={i}>{v}</AlertCell>
                    : <Cell key={i}>{v}</Cell>))}
                </Row>
              ))}
              <Row $even>
                <OrderCell><IconBalance />37855028</OrderCell>
                <Cell>2019.12.23 04:00:13</Cell>
                <Cell $noBorder>balance</Cell>
                <Cell $span={8}>C_TC_#37830475 0.09 BRN</Cell>
                <Cell>77.40</Cell>
              </Row>
              <Row>
                <Cell /><Cell /><Cell /><Cell /><Cell /><Cell /><Cell /><Cell /><Cell /><Cell /><Cell /><Cell />
              </Row>
            </Table>
            <ScrollBar>
              <ScrollBtn $h={25}><svg width="12" height="8" viewBox="0 0 12 8"><path d="M1 7l5-5 5 5" fill="none" stroke="#555" strokeWidth="2" /></svg></ScrollBtn>
              <Thumb />
              <ScrollTrack />
              <ScrollBtn $h={25}><svg width="12" height="8" viewBox="0 0 12 8"><path d="M1 1l5 5 5-5" fill="none" stroke="#555" strokeWidth="2" /></svg></ScrollBtn>
            </ScrollBar>
          </GridWrap>
          <BottomTabs>
            {termTabs.map(([t, w, a, b]) => <BottomTab key={t} $w={w} $active={a}>{t}{b && <Badge>{b}</Badge>}</BottomTab>)}
          </BottomTabs>
        </TerminalMain>
      </Terminal>
      <StatusBar>
        <StatusCell $first $w={858}>Для вызова справки нажмите F1</StatusCell>
        <StatusCell $w={177}>Default</StatusCell>
        <StatusCell $w={161}>2019.10.23 00:00</StatusCell>
        <StatusCell $w={109}>O: 2991.72</StatusCell>
        <StatusCell $w={109}>H: 3005.72</StatusCell>
        <StatusCell $w={105}>L: 2981.97</StatusCell>
        <StatusCell $w={107}>C: 3005.72</StatusCell>
        <StatusCell $w={102}>V: 40279</StatusCell>
        <StatusCell $w={192}><IconSignal />515/3 kb</StatusCell>
      </StatusBar>
    </Window>
  );
}
